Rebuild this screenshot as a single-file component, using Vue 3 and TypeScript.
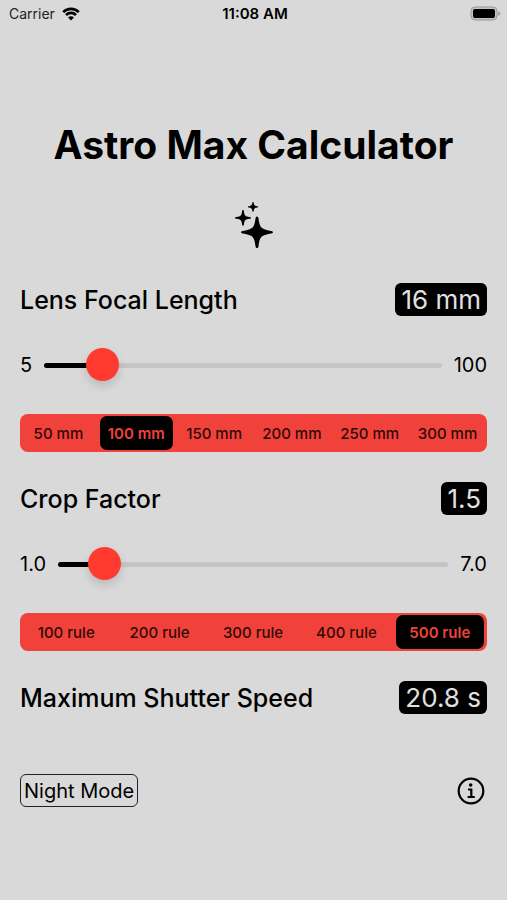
<script setup lang="ts">
import { computed, ref } from 'vue'

const focalLength = ref(16)
const cropFactor = ref(1.5)
const focalPreset = ref(100)
const rule = ref(500)
const night = ref(false)

const presets = [50, 100, 150, 200, 250, 300]
const rules = [100, 200, 300, 400, 500]

const shutter = computed(() => (rule.value / (focalLength.value * cropFactor.value)).toFixed(1))
const focalFill = computed(() => (focalLength.value - 5) / 95)
const cropFill = computed(() => (cropFactor.value - 1) / 6)
</script>

<template>
  <div class="screen" :class="{ night }">
    <header class="status">
      <div class="carrier">
        <span>Carrier</span>
        <svg class="wifi" viewBox="0 0 18 14" aria-hidden="true">
          <path d="M1.2 5.1C5.4 .8 12.6 .8 16.8 5.1" />
          <path d="M4 8C6.8 5.2 11.2 5.2 14 8" />
          <path class="dot" d="M9 13.4L6.1 10.4C7.7 8.9 10.3 8.9 11.9 10.4Z" />
        </svg>
      </div>
      <time class="clock">11:08 AM</time>
      <svg class="battery" viewBox="0 0 31 15" aria-hidden="true">
        <rect class="case" x="1" y="1" width="26" height="13" rx="4" />
        <rect x="3" y="3" width="22" height="9" rx="2" />
        <path class="cap" d="M28.3 5.2Q30.2 5.8 30.2 7.5T28.3 9.8Z" />
      </svg>
    </header>

    <main class="content">
      <h1>Astro Max Calculator</h1>
      <svg class="sparkles" viewBox="0 0 40 48" aria-hidden="true">
        <path d="M23 14.5C23.9 14.5 24.3 15.3 24.5 16.6C25.7 25.2 26.8 27 35.6 28.7C38 29.1 39 29.4 39 30.2S38 31.3 35.6 31.7C26.8 33.4 25.7 35.2 24.5 43.9C24.3 45.2 23.9 46 23 46S21.7 45.2 21.5 43.9C20.3 35.2 19.2 33.4 10.4 31.7C8 31.3 7 31 7 30.2S8 29.1 10.4 28.7C19.2 27 20.3 25.2 21.5 16.6C21.7 15.3 22.1 14.5 23 14.5Z" />
        <path d="M9 8C9.6 8 9.8 8.5 9.9 9.2C10.4 13.5 11.1 14.3 15.5 15C16.5 15.2 17 15.4 17 15.9S16.5 16.6 15.5 16.8C11.1 17.5 10.4 18.3 9.9 22.6C9.8 23.4 9.6 23.8 9 23.8S8.2 23.4 8.1 22.6C7.6 18.3 6.9 17.5 2.5 16.8C1.5 16.6 1 16.4 1 15.9S1.5 15.2 2.5 15C6.9 14.3 7.6 13.5 8.1 9.2C8.2 8.5 8.4 8 9 8Z" />
        <path d="M19 0C19.4 0 19.6 .3 19.7 .8C20 3.3 20.6 3.8 23.2 4.2C23.8 4.3 24.2 4.5 24.2 4.9S23.8 5.5 23.2 5.6C20.6 6 20 6.5 19.7 9C19.6 9.5 19.4 9.8 19 9.8S18.4 9.5 18.3 9C18 6.5 17.4 6 14.8 5.6C14.2 5.5 13.8 5.3 13.8 4.9S14.2 4.3 14.8 4.2C17.4 3.8 18 3.3 18.3 .8C18.4 .3 18.6 0 19 0Z" />
      </svg>

      <section class="group">
        <div class="heading">
          <label for="focal">Lens Focal Length</label>
          <output class="badge" for="focal">{{ focalLength }} mm</output>
        </div>
        <div class="slider">
          <span>5</span>
          <input id="focal" v-model.number="focalLength" type="range" min="5" max="100" :style="{ '--fill': focalFill }" />
          <span>100</span>
        </div>
        <div class="segments" role="radiogroup" aria-label="Focal length">
          <label v-for="p in presets" :key="p">
            <input v-model="focalPreset" type="radio" name="preset" :value="p" />
            <span>{{ p }} mm</span>
          </label>
        </div>
      </section>

      <section class="group">
        <div class="heading">
          <label for="crop">Crop Factor</label>
          <output class="badge" for="crop">{{ cropFactor.toFixed(1) }}</output>
        </div>
        <div class="slider">
          <span>1.0</span>
          <input id="crop" v-model.number="cropFactor" type="range" min="1" max="7" step="0.1" :style="{ '--fill': cropFill }" />
          <span>7.0</span>
        </div>
        <div class="segments" role="radiogroup" aria-label="Rule">
          <label v-for="r in rules" :key="r">
            <input v-model="rule" type="radio" name="rule" :value="r" />
            <span>{{ r }} rule</span>
          </label>
        </div>
      </section>

      <div class="heading">
        <span>Maximum Shutter Speed</span>
        <output class="badge">{{ shutter }} s</output>
      </div>

      <footer class="actions">
        <button class="mode" type="button" @click="night = !night">Night Mode</button>
        <button class="info" type="button" aria-label="Information">
          <svg viewBox="0 0 28 28" aria-hidden="true">
            <circle class="ring" cx="14" cy="14" r="12.3" />
            <circle cx="13.7" cy="8" r="1.8" />
            <path class="stem" d="M11 12.5H14.3V19.8M10.6 20H17.8" />
          </svg>
        </button>
      </footer>
    </main>
  </div>
</template>

<style>
body {
  background: #d9d9d9;
}
</style>

<style scoped>
.screen {
  min-height: 100vh;
  box-sizing: border-box;
  background: #d9d9d9;
  color: #000;
  font-family: Inter, "Liberation Sans", sans-serif;
}
.screen.night {
  background: #8c2620;
}
.status {
  display: grid;
  grid-template-columns: 1fr auto 1fr;
  align-items: center;
  height: 27px;
  padding: 0 6px 0 9px;
  font-size: 14px;
}
.carrier {
  display: flex;
  align-items: center;
  gap: 7px;
  color: #222;
}
.wifi {
  width: 18px;
  height: 14px;
  fill: none;
  stroke: #000;
  stroke-width: 2.6;
}
.wifi .dot {
  fill: #000;
  stroke: none;
}
.clock {
  font-size: 15px;
  font-weight: 600;
}
.battery {
  justify-self: end;
  width: 31px;
  height: 15px;
}
.battery .case {
  fill: #c4c4c4;
  stroke: #999;
}
.battery .cap {
  fill: #999;
}
.content {
  display: flex;
  flex-direction: column;
  padding: 94px 20px 40px;
}
h1 {
  margin: 0;
  font-size: 39px;
  line-height: 48px;
  font-weight: 700;
  text-align: center;
  white-space: nowrap;
}
.sparkles {
  align-self: center;
  width: 40px;
  height: 48px;
  margin: 33px 0;
}
.group {
  margin-bottom: 30px;
}
.heading {
  display: flex;
  align-items: center;
  justify-content: space-between;
  height: 33px;
  font-size: 25px;
  font-weight: 500;
}
.badge {
  padding: 0 6px;
  border-radius: 6px;
  background: #000;
  color: #e0e0e0;
  font-size: 26px;
  line-height: 33px;
  font-weight: 400;
}
.slider {
  display: flex;
  align-items: center;
  gap: 12px;
  height: 34px;
  margin: 32px 0;
  font-size: 20px;
}
.slider input {
  flex: 1;
  min-width: 0;
  height: 34px;
  margin: 0;
  appearance: none;
  background: transparent;
}
.slider input::-webkit-slider-runnable-track {
  height: 5px;
  border-radius: 3px;
  background: linear-gradient(to right, #000 calc(var(--fill) * 100%), #c5c5c5 calc(var(--fill) * 100%));
}
.slider input::-webkit-slider-thumb {
  appearance: none;
  width: 33px;
  height: 33px;
  margin-top: -15px;
  border-radius: 50%;
  background: #ff3b30;
  box-shadow: 0 5px 10px rgba(0, 0, 0, 0.14);
}
.segments {
  display: flex;
  height: 38px;
  border-radius: 8px;
  background: #f0423a;
}
.segments label {
  display: flex;
  flex: 1;
  position: relative;
  padding: 2px 3px 2px 2px;
}
.segments input {
  position: absolute;
  inset: 0;
  margin: 0;
  opacity: 0;
}
.segments span {
  flex: 1;
  border-radius: 7px;
  color: #300a08;
  font-size: 15px;
  line-height: 35px;
  font-weight: 500;
  text-align: center;
  white-space: nowrap;
}
.segments input:checked + span {
  background: #000;
  color: #f0423a;
  font-weight: 600;
}
.actions {
  display: flex;
  align-items: center;
  justify-content: space-between;
  margin-top: 60px;
}
button {
  border: 0;
  background: none;
  color: inherit;
  font-family: inherit;
}
.mode {
  height: 33px;
  padding: 0 3px;
  border: 1px solid #222;
  border-radius: 6px;
  font-size: 20px;
}
.info {
  display: flex;
  padding: 0;
  margin-right: 2px;
}
.info svg {
  width: 28px;
  height: 28px;
}
.info .ring,
.info .stem {
  fill: none;
  stroke: #000;
  stroke-width: 2.2;
}
</style>
